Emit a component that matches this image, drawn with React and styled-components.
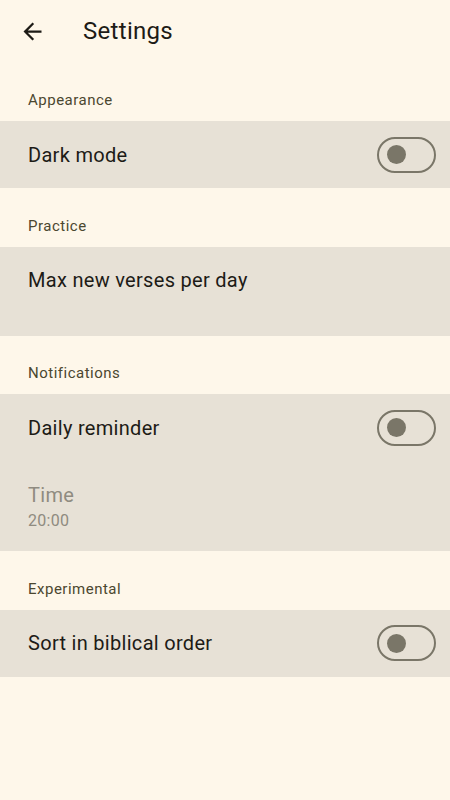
import React from 'react'
import styled, { createGlobalStyle } from 'styled-components'

const GlobalStyle = createGlobalStyle`
  html, body {
    margin: 0;
    padding: 0;
    background: #fef7ea;
  }
  body {
    font-family: Roboto, 'Noto Sans', sans-serif;
    color: #1d1b16;
  }
`

const Page = styled.div`
  width: 450px;
  min-height: 800px;
  background: #fef7ea;
`

const TopBar = styled.header`
  height: 62px;
  display: flex;
  align-items: center;
`

const BackButton = styled.button`
  width: 64px;
  height: 62px;
  display: flex;
  align-items: center;
  justify-content: center;
  background: none;
  border: none;
  padding: 0;
  color: #1d1b16;
  cursor: pointer;
`

const Title = styled.h1`
  margin: 0 0 0 19px;
  font-size: 24px;
  font-weight: 400;
  letter-spacing: 0.3px;
`

const SectionLabel = styled.div`
  padding: ${p => (p.first ? '28px' : '27.5px')} 28px 11px;
  font-size: 15px;
  line-height: 20px;
  letter-spacing: 0.5px;
  color: #4b4730;
`

const Card = styled.section`
  background: #e7e1d6;
`

const Row = styled.div`
  min-height: ${p => p.height || 67}px;
  box-sizing: border-box;
  display: flex;
  align-items: ${p => (p.top ? 'flex-start' : 'center')};
  justify-content: space-between;
  padding: ${p => (p.top ? `${p.pad || 21}px 14px 0 28px` : '0 14px 0 28px')};
`

const Texts = styled.div`
  display: flex;
  flex-direction: column;
`

const RowTitle = styled.div`
  font-size: 20px;
  line-height: 24px;
  letter-spacing: 0.3px;
  color: ${p => (p.disabled ? '#8f8b80' : '#1d1b16')};
`

const RowValue = styled.div`
  font-size: 16px;
  line-height: 20px;
  margin-top: 4px;
  letter-spacing: 0.3px;
  color: #8f8b80;
`

const Switch = styled.div`
  width: 59px;
  height: 36px;
  box-sizing: border-box;
  border: 2px solid #7a7668;
  border-radius: 18px;
  display: flex;
  align-items: center;
  padding-left: 8px;
`

const Thumb = styled.div`
  width: 19px;
  height: 19px;
  border-radius: 50%;
  background: #7a7668;
`

const Toggle = () => (
  <Switch>
    <Thumb />
  </Switch>
)

const ArrowBack = () => (
  <svg width="27" height="27" viewBox="0 0 24 24" fill="currentColor">
    <path d="M20 11H7.83l5.59-5.59L12 4l-8 8 8 8 1.41-1.41L7.83 13H20v-2z" />
  </svg>
)

export default function App() {
  return (
    <Page>
      <GlobalStyle />
      <TopBar>
        <BackButton aria-label="Back">
          <ArrowBack />
        </BackButton>
        <Title>Settings</Title>
      </TopBar>

      <SectionLabel first>Appearance</SectionLabel>
      <Card>
        <Row>
          <RowTitle>Dark mode</RowTitle>
          <Toggle />
        </Row>
      </Card>

      <SectionLabel>Practice</SectionLabel>
      <Card>
        <Row top height={89}>
          <RowTitle>Max new verses per day</RowTitle>
        </Row>
      </Card>

      <SectionLabel>Notifications</SectionLabel>
      <Card>
        <Row>
          <RowTitle>Daily reminder</RowTitle>
          <Toggle />
        </Row>
        <Row top pad={22} height={90}>
          <Texts>
            <RowTitle disabled>Time</RowTitle>
            <RowValue>20:00</RowValue>
          </Texts>
        </Row>
      </Card>

      <SectionLabel>Experimental</SectionLabel>
      <Card>
        <Row>
          <RowTitle>Sort in biblical order</RowTitle>
          <Toggle />
        </Row>
      </Card>
    </Page>
  )
}
